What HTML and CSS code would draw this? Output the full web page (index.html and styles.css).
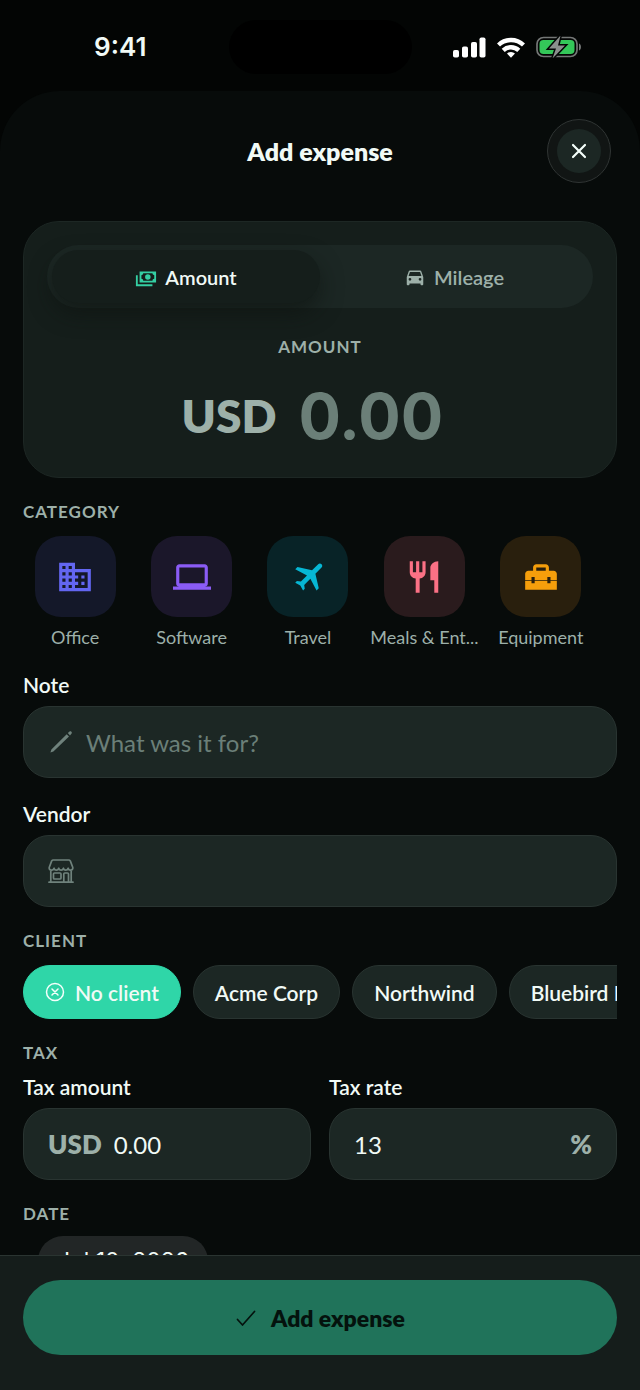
FILE: index.html
```html
<!DOCTYPE html>
<html lang="en">
<head>
<meta charset="utf-8">
<meta name="viewport" content="width=device-width, initial-scale=1">
<title>Add expense</title>
<link rel="stylesheet" href="styles.css">
</head>
<body>
<div class="status">
  <span class="status-time">9:41</span>
  <span class="island"></span>
  <div class="status-icons">
    <svg width="33" height="21" viewBox="0 0 33 21" fill="#fff" aria-hidden="true">
      <rect x="0" y="13" width="6" height="7.500" rx="1.800"/><rect x="9" y="9.500" width="6" height="11" rx="1.800"/><rect x="18" y="5" width="6" height="15.500" rx="1.800"/><rect x="26.500" y="0.500" width="6" height="20" rx="1.800"/>
    </svg>
    <svg width="28" height="21" viewBox="0 0 28 21" fill="none" stroke="#fff" stroke-width="4.400" aria-hidden="true">
      <path d="M1.500 8a18 18 0 0 1 25 0"/><path d="M6.200 13.300a11.300 11.300 0 0 1 15.600 0"/><path d="M14 20.800l-4-4.200a5.600 5.600 0 0 1 8 0z" fill="#fff" stroke="none"/>
    </svg>
    <svg width="46" height="22" viewBox="0 0 46 22" aria-hidden="true">
      <rect x="1" y="1.500" width="40" height="19" rx="6.500" fill="none" stroke="#747776" stroke-width="1.700"/>
      <path d="M43 7.500c2.600.8 2.600 6.200 0 7z" fill="#747776"/>
      <rect x="3.500" y="4" width="35" height="14" rx="4" fill="#34c759"/>
      <path d="M24.500-.5L13 12.500h7l-3.500 10L29 9.500h-7z" fill="#8b8f8d" stroke="#040606" stroke-width="3" paint-order="stroke"/>
    </svg>
  </div>
</div>

<main class="sheet">
  <header class="sheet-head">
    <h1 class="title">Add expense</h1>
    <button class="close" type="button" aria-label="Close"><span class="close-disc">
      <svg width="16" height="16" viewBox="0 0 16 16" fill="none" stroke="#f4fffb" stroke-width="2.200" stroke-linecap="round" aria-hidden="true"><path d="M2 2l12 12M14 2L2 14"/></svg>
    </span></button>
  </header>

  <form class="form" id="expense">
    <section class="card">
      <div class="segmented">
        <button class="segment segment-on" type="button">
          <svg width="22" height="22" viewBox="0 0 24 24" fill="#34cfa3" aria-hidden="true"><path d="M5,6H23V18H5V6M14,9A3,3 0 0,1 17,12A3,3 0 0,1 14,15A3,3 0 0,1 11,12A3,3 0 0,1 14,9M9,8A2,2 0 0,1 7,10V14A2,2 0 0,1 9,16H19A2,2 0 0,1 21,14V10A2,2 0 0,1 19,8H9M1,10H3V20H19V22H1V10Z"/></svg>
          Amount
        </button>
        <button class="segment" type="button">
          <svg width="22" height="22" viewBox="0 0 24 24" fill="currentColor" aria-hidden="true"><path d="M5,11L6.500,6.500H17.500L19,11M17.500,16A1.500,1.500 0 0,1 16,14.500A1.500,1.500 0 0,1 17.500,13A1.500,1.500 0 0,1 19,14.500A1.500,1.500 0 0,1 17.500,16M6.500,16A1.500,1.500 0 0,1 5,14.500A1.500,1.500 0 0,1 6.500,13A1.500,1.500 0 0,1 8,14.500A1.500,1.500 0 0,1 6.500,16M18.920,6C18.720,5.420 18.160,5 17.500,5H6.500C5.840,5 5.280,5.420 5.080,6L3,12V20A1,1 0 0,0 4,21H5A1,1 0 0,0 6,20V19H18V20A1,1 0 0,0 19,21H20A1,1 0 0,0 21,20V12L18.920,6Z"/></svg>
          Mileage
        </button>
      </div>
      <label class="caps amount-label" for="amount">AMOUNT</label>
      <div class="amount-row">
        <span class="amount-currency">USD</span>
        <input class="amount-input" id="amount" type="text" placeholder="0.00">
      </div>
    </section>

    <section class="group">
      <h2 class="caps">CATEGORY</h2>
      <div class="categories">
        <button class="category" type="button">
          <span class="tile tile-office"><svg width="38" height="38" viewBox="0 0 24 24" fill="currentColor" aria-hidden="true"><path d="M18,15H16V17H18M18,11H16V13H18M20,19H12V17H14V15H12V13H14V11H12V9H20M10,7H8V5H10M10,11H8V9H10M10,15H8V13H10M10,19H8V17H10M6,7H4V5H6M6,11H4V9H6M6,15H4V13H6M6,19H4V17H6M12,7V3H2V21H22V7H12Z"/></svg></span>
          <span class="category-name">Office</span>
        </button>
        <button class="category" type="button">
          <span class="tile tile-software"><svg width="38" height="38" viewBox="0 0 24 24" fill="currentColor" aria-hidden="true"><path d="M4,6H20V16H4M20,18A2,2 0 0,0 22,16V6C22,4.890 21.100,4 20,4H4C2.890,4 2,4.890 2,6V16A2,2 0 0,0 4,18H0V20H24V18H20Z"/></svg></span>
          <span class="category-name">Software</span>
        </button>
        <button class="category" type="button">
          <span class="tile tile-travel"><svg width="38" height="38" viewBox="0 0 24 24" fill="currentColor" aria-hidden="true"><path d="M20.560 3.910C21.150 4.500 21.150 5.450 20.560 6.030L16.670 9.920L18.790 19.110L17.380 20.530L13.500 13.100L9.600 17L9.960 19.470L8.890 20.530L7.130 17.350L3.940 15.580L5 14.500L7.500 14.870L11.370 11L3.940 7.090L5.360 5.680L14.550 7.800L18.440 3.910C19 3.330 20 3.330 20.560 3.910Z"/></svg></span>
          <span class="category-name">Travel</span>
        </button>
        <button class="category" type="button">
          <span class="tile tile-meals"><svg width="38" height="38" viewBox="0 0 24 24" fill="currentColor" aria-hidden="true"><path d="M11,9H9V2H7V9H5V2H3V9C3,11.120 4.660,12.840 6.750,12.970V22H9.250V12.970C11.340,12.840 13,11.120 13,9V2H11V9M16,6V14H18.500V22H21V2C18.240,2 16,4.240 16,6Z"/></svg></span>
          <span class="category-name">Meals &amp; Ent...</span>
        </button>
        <button class="category" type="button">
          <span class="tile tile-equipment"><svg width="38" height="38" viewBox="0 0 24 24" fill="currentColor" aria-hidden="true"><path d="M18,16H16V14.600H8V16H6V14.600H2V20H22V14.600H18V16M20,8H17V6C17,4.900 16.100,4 15,4H9C7.900,4 7,4.900 7,6V8H4C2.900,8 2,8.900 2,10V14H6V12H8V14H16V12H18V14H22V10C22,8.900 21.100,8 20,8M15,8H9V6H15V8Z"/></svg></span>
          <span class="category-name">Equipment</span>
        </button>
      </div>
    </section>

    <div class="field">
      <label class="label" for="note">Note</label>
      <div class="control">
        <svg width="26" height="26" viewBox="0 0 26 26" fill="#6f827c" aria-hidden="true"><path d="M18.700 5.200l2.300 2.300L5.400 22.600 2.400 23.600l1-3zM19.800 4.100l1.500-1.400c.7-.6 1.500-.6 2.100 0s.6 1.400 0 2.100L22 6.400z"/></svg>
        <input class="input" id="note" type="text" placeholder="What was it for?">
      </div>
    </div>

    <div class="field">
      <label class="label" for="vendor">Vendor</label>
      <div class="control">
        <svg width="26" height="26" viewBox="0 0 26 26" fill="none" stroke="#6f827c" stroke-width="1.700" stroke-linejoin="round" stroke-linecap="round" aria-hidden="true"><path d="M5.200 2h15.600c.7 0 1.100.3 1.500.9l2.500 6.600c.4 3.200-4 3.500-4.700.7-.7 2.600-4 2.600-4.700 0-.7 2.600-4 2.600-4.700 0-.7 2.600-4 2.600-4.700 0-.8 2.800-5.200 2.500-4.800-.7l2.500-6.600c.4-.6.800-.9 1.500-.9zM2.800 12.300v11.800M23.200 12.300v11.800M1 24.200h24"/><rect x="5.500" y="15" width="7.500" height="6" rx="1"/><path d="M15.800 24v-8c0-.7.400-1 1-1h2.700c.7 0 1 .4 1 1v8"/></svg>
        <input class="input" id="vendor" type="text">
      </div>
    </div>

    <section class="group">
      <h2 class="caps">CLIENT</h2>
      <div class="chips">
        <button class="chip chip-on" type="button">
          <svg width="20" height="20" viewBox="0 0 20 20" fill="none" stroke="#f4fffb" stroke-width="1.500" stroke-linecap="round" aria-hidden="true"><circle cx="10" cy="10" r="8.500"/><path d="M7 7l6 6M13 7l-6 6"/></svg>
          No client
        </button>
        <button class="chip" type="button">Acme Corp</button>
        <button class="chip" type="button">Northwind</button>
        <button class="chip" type="button">Bluebird Labs</button>
      </div>
    </section>

    <section class="group group-tight">
      <h2 class="caps">TAX</h2>
      <div class="columns">
        <div class="field">
          <label class="label" for="tax-amount">Tax amount</label>
          <div class="control">
            <span class="affix">USD</span>
            <input class="input" id="tax-amount" type="text" value="0.00">
          </div>
        </div>
        <div class="field">
          <label class="label" for="tax-rate">Tax rate</label>
          <div class="control">
            <input class="input" id="tax-rate" type="text" value="13">
            <span class="affix">%</span>
          </div>
        </div>
      </div>
    </section>

    <section class="group group-tight">
      <h2 class="caps">DATE</h2>
      <button class="date" type="button">Jul 10, 2026</button>
    </section>
  </form>
</main>

<footer class="footer">
  <button class="submit" type="submit" form="expense">
    <svg width="22" height="22" viewBox="0 0 22 22" fill="none" stroke="currentColor" stroke-width="1.700" stroke-linecap="round" stroke-linejoin="round" aria-hidden="true"><path d="M2.500 12.500l5 5.500L19.500 4.500"/></svg>
    Add expense
  </button>
</footer>
</body>
</html>
```
FILE: styles.css
```css
* { box-sizing: border-box; }

body {
  display: flex;
  flex-direction: column;
  height: 100vh;
  margin: 0;
  overflow: hidden;
  background: #030504;
  color: #f1faf6;
  font-family: Lato, "Liberation Sans", sans-serif;
}

button, input {
  margin: 0;
  padding: 0;
  border: 0;
  background: none;
  color: inherit;
  font-family: inherit;
}

h1, h2 { margin: 0; }
svg { display: block; flex: none; }

.status {
  display: grid;
  grid-template-columns: 1fr 183px 1fr;
  align-items: center;
  flex: none;
  height: 91px;
  padding: 3px 0 0;
}
.status-time {
  justify-self: center;
  padding-left: 12px;
  font: 600 26px/30px Inter, sans-serif;
}
.island {
  height: 54px;
  border-radius: 27px;
  background: #000;
}
.status-icons {
  display: flex;
  justify-content: center;
  align-items: center;
  gap: 11px;
  padding-right: 16px;
}

.sheet {
  flex: 1;
  min-height: 0;
  overflow: hidden;
  padding: 28px 23px 0;
  border-radius: 60px 60px 0 0;
  background: #070b0a;
}
.sheet-head {
  display: grid;
  grid-template-columns: 64px 1fr 64px;
  align-items: center;
  padding: 0 6px 38px;
}
.title {
  grid-column: 2;
  text-align: center;
  font-size: 25px;
  line-height: 32px;
  font-weight: 800;
}
.close {
  display: grid;
  place-items: center;
  height: 64px;
  border: 1px solid #303534;
  border-radius: 50%;
  background: #111514;
}
.close-disc {
  display: grid;
  place-items: center;
  width: 44px;
  height: 44px;
  border-radius: 50%;
  background: #1c2724;
}

.form {
  display: flex;
  flex-direction: column;
  gap: 24px;
}

.caps {
  color: #9db0a9;
  font-size: 17px;
  line-height: 20px;
  font-weight: 700;
  letter-spacing: 1px;
}

.card {
  display: flex;
  flex-direction: column;
  padding: 23px 23px 29px;
  border: 1px solid #1d2724;
  border-radius: 36px;
  background: #151e1b;
}
.segmented {
  display: grid;
  grid-template-columns: 1fr 1fr;
  padding: 5px;
  border-radius: 32px;
  background: #1c2724;
}
.segment {
  display: flex;
  justify-content: center;
  align-items: center;
  gap: 8px;
  height: 53px;
  border-radius: 27px;
  color: #9db0a9;
  font-size: 20px;
  font-weight: 600;
}
.segment-on {
  background: #151e1b;
  color: #f1faf6;
  box-shadow: 0 10px 22px rgba(14, 18, 15, 0.6);
}
.amount-label {
  margin-top: 29px;
  text-align: center;
}
.amount-row {
  display: flex;
  justify-content: center;
  align-items: center;
  gap: 22px;
  margin-top: 27px;
}
.amount-currency {
  color: #9db0a9;
  font-size: 46px;
  line-height: 64px;
  font-weight: 800;
}
.amount-input {
  width: 160px;
  height: 64px;
  font-family: Inter, sans-serif;
  font-size: 63px;
  font-weight: 700;
}

input::placeholder {
  color: #6b7f78;
  opacity: 1;
}

.group {
  display: flex;
  flex-direction: column;
  gap: 14px;
}
.group-tight { gap: 12px; }

.categories {
  display: grid;
  grid-template-columns: repeat(5, minmax(0, 1fr));
  gap: 12px;
  padding-right: 24px;
}
.category {
  display: flex;
  flex-direction: column;
  align-items: center;
  gap: 8px;
  color: #9db0a9;
  font-size: 18px;
  line-height: 24px;
}
.category-name { white-space: nowrap; }
.tile {
  display: grid;
  place-items: center;
  width: 81px;
  height: 81px;
  border-radius: 26px;
}
.tile-office { background: #141829; color: #6366f1; }
.tile-software { background: #1b172a; color: #8b5cf6; }
.tile-travel { background: #082327; color: #06b6d4; }
.tile-meals { background: #2a1b1d; color: #fb7185; }
.tile-equipment { background: #291f0d; color: #f59e0b; }

.field {
  display: flex;
  flex-direction: column;
  gap: 9px;
  min-width: 0;
}
.label {
  font-size: 21px;
  line-height: 24px;
  font-weight: 600;
}
.control {
  display: flex;
  align-items: center;
  gap: 12px;
  height: 72px;
  padding: 0 24px;
  border: 1px solid #293431;
  border-radius: 26px;
  background: #1c2724;
}
.input {
  flex: 1;
  min-width: 0;
  height: 48px;
  font-size: 24px;
}
.affix {
  color: #9db0a9;
  font-size: 26px;
  font-weight: 800;
}

.chips {
  display: flex;
  gap: 12px;
  overflow: hidden;
}
.chip {
  display: flex;
  align-items: center;
  flex: none;
  gap: 10px;
  height: 54px;
  padding: 0 21px;
  border: 1px solid #293431;
  border-radius: 27px;
  background: #1c2724;
  font-size: 21px;
  font-weight: 600;
}
.chip-on {
  border-color: #2fd6a8;
  background: #2fd6a8;
}

.columns {
  display: grid;
  grid-template-columns: 1fr 1fr;
  gap: 18px;
}

.date {
  align-self: flex-start;
  height: 50px;
  margin-left: 15px;
  padding: 0 19px;
  border-radius: 25px;
  background: #222626;
  font: 400 23px/50px Inter, sans-serif;
}

.footer {
  flex: none;
  padding: 24px 23px 35px;
  border-top: 1px solid #2a3431;
  background: #151d1b;
}
.submit {
  display: flex;
  justify-content: center;
  align-items: center;
  gap: 14px;
  width: 100%;
  height: 75px;
  border-radius: 38px;
  background: #20735a;
  color: #04120d;
  font-size: 23px;
  font-weight: 800;
}
```
